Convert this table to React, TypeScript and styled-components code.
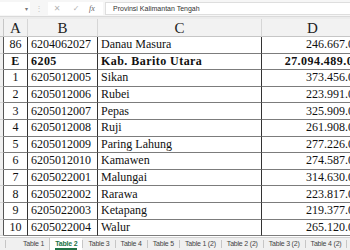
import React from "react";
import styled, { createGlobalStyle } from "styled-components";

const GlobalStyle = createGlobalStyle`
  html, body { margin: 0; padding: 0; background: #fff; overflow: hidden; }
  * { box-sizing: border-box; }
`;

const Frame = styled.div`
  width: 350px;
  height: 250px;
  overflow: hidden;
  display: flex;
  flex-direction: column;
  background: #fff;
`;

const FormulaBar = styled.div`
  height: 17px;
  flex: none;
  display: flex;
  align-items: center;
  background: #f6f6f6;
  border-bottom: 1px solid #dadada;
  font-family: "Liberation Sans", Arial, sans-serif;
`;

const NameBox = styled.div`
  width: 30px;
  height: 13px;
  background: #fff;
  display: flex;
  align-items: center;
  justify-content: flex-end;
  padding-right: 2px;
  font-size: 6px;
  color: #777;
`;

const Grip = styled.div`
  width: 18px;
  text-align: center;
  font-size: 8px;
  color: #c4c4c4;
`;

const FxBox = styled.div`
  width: 55px;
  height: 13px;
  background: #fff;
  display: flex;
  align-items: center;
`;

const FxIcon = styled.span<{ $w: number; $dark?: boolean }>`
  width: ${(p) => p.$w}px;
  text-align: center;
  font-size: 8px;
  color: ${(p) => (p.$dark ? "#666" : "#b4b4b4")};
  font-family: ${(p) => (p.$dark ? '"Liberation Serif", serif' : '"DejaVu Sans", sans-serif')};
  font-style: ${(p) => (p.$dark ? "italic" : "normal")};
`;

const FormulaInput = styled.div`
  flex: 1;
  height: 13px;
  margin-left: 2px;
  background: #fff;
  border: 1px solid #dedede;
  border-right: none;
  display: flex;
  align-items: center;
  padding-left: 7px;
  font-size: 7px;
  color: #333;
  white-space: pre;
`;

const Gap = styled.div`
  height: 2px;
  flex: none;
  background: #ececec;
`;

const Sheet = styled.div`
  flex: 1;
  display: grid;
  grid-template-columns: 4px 24px 70px 164px 108px;
  grid-template-rows: 18px repeat(12, 16.6px);
  width: 370px;
  font-family: "Liberation Serif", "Times New Roman", serif;
`;

const Corner = styled.div`
  background: #f0f0f0;
  border-right: 1px solid #c6c6c6;
  border-bottom: 1px solid #c6c6c6;
`;

const ColHeader = styled.div<{ $shift?: number }>`
  background: #f2f2f2;
  border-right: 1px solid #d6d6d6;
  border-bottom: 1px solid #c6c6c6;
  display: flex;
  align-items: center;
  justify-content: center;
  font-size: 15px;
  color: #222;
  padding-top: 1px;
  padding-right: ${(p) => p.$shift ?? 0}px;
`;

const RowHead = styled.div`
  background: #f0f0f0;
  border-right: 1px solid #555;
  border-bottom: 1px solid #d4d4d4;
`;

const Cell = styled.div<{ $align?: "left" | "center" | "right"; $bold?: boolean }>`
  display: flex;
  align-items: center;
  justify-content: ${(p) =>
    p.$align === "center" ? "center" : p.$align === "right" ? "flex-end" : "flex-start"};
  padding: 0 3px;
  border-right: 1px solid #333;
  border-bottom: 1px solid #7c7c7c;
  font-size: 12px;
  font-weight: ${(p) => (p.$bold ? 700 : 400)};
  letter-spacing: ${(p) => (p.$bold ? "0.45px" : "0")};
  color: #111;
  white-space: nowrap;
  overflow: hidden;
`;

const TabBar = styled.div`
  height: 13px;
  flex: none;
  display: flex;
  align-items: stretch;
  background: #f0f0f0;
  border-top: 1px solid #d2d2d2;
  font-family: "Liberation Sans", Arial, sans-serif;
`;

const TabLead = styled.div`
  width: 6px;
  margin: 2px 11px 2px 0;
  border-right: 1px solid #c6c6c6;
`;

const Tab = styled.div<{ $active?: boolean }>`
  display: flex;
  align-items: center;
  padding: 0 5px;
  font-size: 7px;
  letter-spacing: -0.2px;
  white-space: nowrap;
  color: ${(p) => (p.$active ? "#217346" : "#444")};
  font-weight: ${(p) => (p.$active ? 700 : 400)};
  background: ${(p) => (p.$active ? "#fff" : "transparent")};
  border-left: 1px solid ${(p) => (p.$active ? "#c6c6c6" : "transparent")};
  position: relative;
  &::after {
    content: "";
    position: absolute;
    right: -1px;
    top: 2px;
    bottom: 2px;
    border-right: 1px solid #c6c6c6;
  }
`;

const TabLabel = styled.span<{ $active?: boolean }>`
  padding-bottom: 1px;
  border-bottom: 2px solid ${(p) => (p.$active ? "#217346" : "transparent")};
  margin-top: 2px;
`;

type Row = { no: string; code: string; name: string; value: string; bold?: boolean };

const rows: Row[] = [
  { no: "86", code: "6204062027", name: "Danau Masura", value: "246.667.000" },
  { no: "E", code: "6205", name: "Kab. Barito Utara", value: "27.094.489.000", bold: true },
  { no: "1", code: "6205012005", name: "Sikan", value: "373.456.000" },
  { no: "2", code: "6205012006", name: "Rubei", value: "223.991.000" },
  { no: "3", code: "6205012007", name: "Pepas", value: "325.909.000" },
  { no: "4", code: "6205012008", name: "Ruji", value: "261.908.000" },
  { no: "5", code: "6205012009", name: "Paring Lahung", value: "277.226.000" },
  { no: "6", code: "6205012010", name: "Kamawen", value: "274.587.000" },
  { no: "7", code: "6205022001", name: "Malungai", value: "314.630.000" },
  { no: "8", code: "6205022002", name: "Rarawa", value: "223.817.000" },
  { no: "9", code: "6205022003", name: "Ketapang", value: "219.377.000" },
  { no: "10", code: "6205022004", name: "Walur", value: "265.120.000" },
];

const tabs = [
  "Table 1",
  "Table 2",
  "Table 3",
  "Table 4",
  "Table 5",
  "Table 1 (2)",
  "Table 2 (2)",
  "Table 3 (2)",
  "Table 4 (2)",
];

export default function App() {
  return (
    <>
      <GlobalStyle />
      <Frame>
        <FormulaBar>
          <NameBox>▾</NameBox>
          <Grip>⋮</Grip>
          <FxBox>
            <FxIcon $w={18}>✕</FxIcon>
            <FxIcon $w={20}>✓</FxIcon>
            <FxIcon $w={12} $dark>
              fx
            </FxIcon>
          </FxBox>
          <FormulaInput>{"Provinsi Kalimantan Tengah"}</FormulaInput>
        </FormulaBar>
        <Gap />
        <Sheet>
          <Corner />
          <ColHeader>A</ColHeader>
          <ColHeader>B</ColHeader>
          <ColHeader>C</ColHeader>
          <ColHeader $shift={6}>D</ColHeader>
          {rows.map((r) => (
            <React.Fragment key={r.no}>
              <RowHead />
              <Cell $align="center" $bold={r.bold}>
                {r.no}
              </Cell>
              <Cell $bold={r.bold}>{r.code}</Cell>
              <Cell $bold={r.bold}>{r.name}</Cell>
              <Cell $align="right" $bold={r.bold}>
                {r.value}
              </Cell>
            </React.Fragment>
          ))}
        </Sheet>
        <TabBar>
          <TabLead />
          {tabs.map((t) => (
            <Tab key={t} $active={t === "Table 2"}>
              <TabLabel $active={t === "Table 2"}>{t}</TabLabel>
            </Tab>
          ))}
        </TabBar>
      </Frame>
    </>
  );
}
